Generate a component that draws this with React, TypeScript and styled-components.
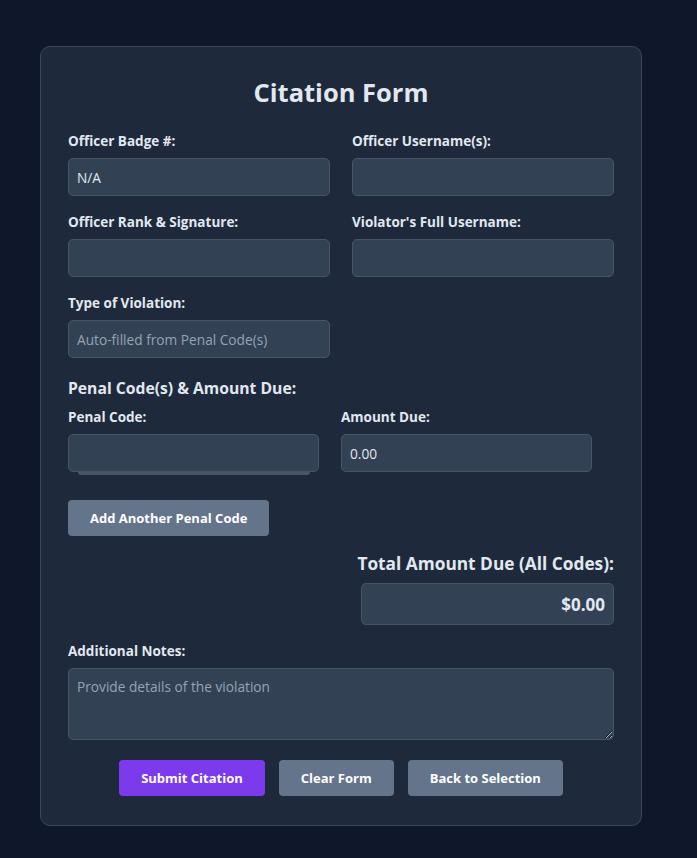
import styled, { createGlobalStyle } from "styled-components";

const GlobalStyle = createGlobalStyle`
  * { box-sizing: border-box; }
  body {
    margin: 0;
    background: #0f172a;
    font-family: "Open Sans", Lato, sans-serif;
    color: #e2e8f0;
  }
`;

const Page = styled.div`
  min-height: 858px;
  padding: 46px 55px 33px 40px;
`;

const Card = styled.form`
  width: 602px;
  background: #1e293b;
  border: 1px solid #3b4758;
  border-radius: 10px;
  padding: 25px 27px 29px 27px;
`;

const Title = styled.h2`
  margin: 0 0 21px;
  text-align: center;
  font-size: 25.5px;
  font-weight: 700;
  color: #e2e8f0;
  line-height: 40px;
`;

const Grid = styled.div`
  display: grid;
  grid-template-columns: 262px 262px;
  column-gap: 22px;
  row-gap: 18px;
`;

const Field = styled.div`
  display: flex;
  flex-direction: column;
`;

const Label = styled.label`
  font-size: 13.5px;
  font-weight: 700;
  color: #e2e8f0;
  line-height: 16px;
  margin-bottom: 9px;
  white-space: nowrap;
`;

const Input = styled.input<{ $align?: string; $big?: boolean }>`
  width: 100%;
  height: ${({ $big }) => ($big ? "42px" : "38px")};
  background: #334155;
  border: 1px solid #475569;
  border-radius: 5px;
  color: #e2e8f0;
  font-family: inherit;
  font-size: ${({ $big }) => ($big ? "17px" : "13.7px")};
  font-weight: ${({ $big }) => ($big ? 700 : 400)};
  text-align: ${({ $align }) => $align || "left"};
  padding: 0 8px;
  outline: none;
  &::placeholder {
    color: #94a3b8;
  }
`;

const SectionTitle = styled.h3`
  margin: 21px 0 12px;
  font-size: 15.7px;
  font-weight: 700;
  line-height: 18px;
  color: #e2e8f0;
`;

const PenalRow = styled.div`
  display: grid;
  grid-template-columns: 251px 251px;
  column-gap: 22px;
`;

const Suggest = styled.div`
  height: 3px;
  margin: 0 9px 0 10px;
  background: #475569;
  border-radius: 0 0 3px 3px;
`;

const Button = styled.button<{ $primary?: boolean }>`
  border: none;
  border-radius: 4px;
  background: ${({ $primary }) => ($primary ? "#7c3aed" : "#64748b")};
  color: #ffffff;
  font-family: inherit;
  font-size: 13px;
  font-weight: 700;
  height: 36px;
  padding: 0 22px;
  cursor: pointer;
`;

const AddRow = styled.div`
  margin-top: 25px;
`;

const TotalBlock = styled.div`
  margin-top: 17px;
  display: flex;
  flex-direction: column;
  align-items: flex-end;
`;

const TotalLabel = styled.div`
  font-size: 17.3px;
  font-weight: 700;
  line-height: 22px;
  margin-bottom: 8px;
  color: #e2e8f0;
`;

const TotalBox = styled.div`
  width: 253px;
`;

const NotesField = styled(Field)`
  margin-top: 18px;
`;

const TextArea = styled.textarea`
  width: 100%;
  height: 72px;
  background: #334155;
  border: 1px solid #475569;
  border-radius: 5px;
  color: #e2e8f0;
  font-family: inherit;
  font-size: 13.7px;
  padding: 8px;
  resize: vertical;
  outline: none;
  &::placeholder {
    color: #94a3b8;
  }
`;

const Actions = styled.div`
  margin-top: 20px;
  display: flex;
  justify-content: center;
  gap: 14px;
`;

export default function App() {
  return (
    <>
      <GlobalStyle />
      <Page>
        <Card onSubmit={(e) => e.preventDefault()}>
          <Title>Citation Form</Title>
          <Grid>
            <Field>
              <Label>Officer Badge #:</Label>
              <Input defaultValue="N/A" />
            </Field>
            <Field>
              <Label>Officer Username(s):</Label>
              <Input />
            </Field>
            <Field>
              <Label>Officer Rank &amp; Signature:</Label>
              <Input />
            </Field>
            <Field>
              <Label>Violator's Full Username:</Label>
              <Input />
            </Field>
            <Field>
              <Label>Type of Violation:</Label>
              <Input placeholder="Auto-filled from Penal Code(s)" readOnly />
            </Field>
          </Grid>

          <SectionTitle>Penal Code(s) &amp; Amount Due:</SectionTitle>
          <PenalRow>
            <Field>
              <Label>Penal Code:</Label>
              <Input />
              <Suggest />
            </Field>
            <Field>
              <Label>Amount Due:</Label>
              <Input defaultValue="0.00" />
            </Field>
          </PenalRow>

          <AddRow>
            <Button type="button">Add Another Penal Code</Button>
          </AddRow>

          <TotalBlock>
            <TotalLabel>Total Amount Due (All Codes):</TotalLabel>
            <TotalBox>
              <Input $big $align="right" value="$0.00" readOnly />
            </TotalBox>
          </TotalBlock>

          <NotesField>
            <Label>Additional Notes:</Label>
            <TextArea placeholder="Provide details of the violation" />
          </NotesField>

          <Actions>
            <Button $primary type="submit">Submit Citation</Button>
            <Button type="button">Clear Form</Button>
            <Button type="button">Back to Selection</Button>
          </Actions>
        </Card>
      </Page>
    </>
  );
}
